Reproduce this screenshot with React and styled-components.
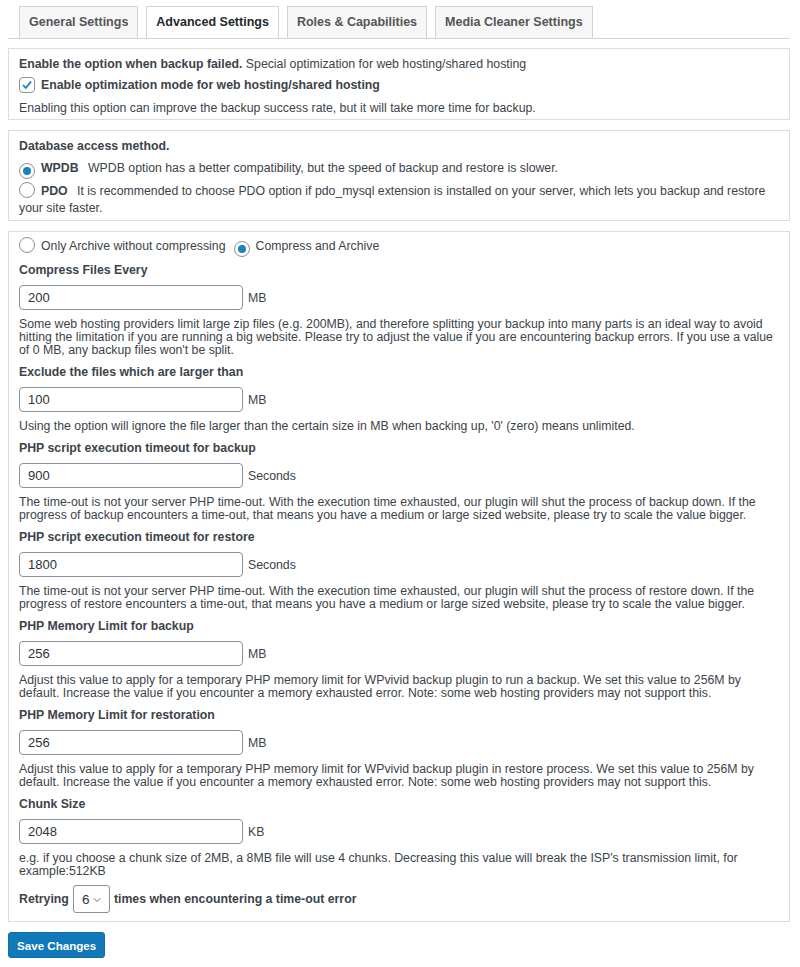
import React from 'react';
import styled, { createGlobalStyle } from 'styled-components';
import { ChevronDown } from 'lucide-react';

const GlobalStyle = createGlobalStyle`
  body {
    margin: 0;
    background: #fff;
    font-family: "Liberation Sans", Arial, sans-serif;
    font-size: 12.3px;
    color: #3c434a;
  }
`;

const Page = styled.div`
  width: 782px;
  padding: 6px 0 0 8px;
`;

const TabBar = styled.nav`
  display: flex;
  gap: 8px;
  padding-left: 11px;
  border-bottom: 1px solid #d4d4d4;
`;

const Tab = styled.div`
  height: 31px;
  line-height: 31px;
  padding: 0 9px;
  border: 1px solid #d4d4d4;
  border-bottom: none;
  background: ${(p) => (p.$active ? '#fff' : '#f7f7f7')};
  color: ${(p) => (p.$active ? '#23282d' : '#555')};
  font-size: 12.5px;
  font-weight: 600;
`;

const Box = styled.section`
  margin-top: ${(p) => p.$top || 10}px;
  background: #fff;
  border: 1px solid #dcdcdc;
  padding: ${(p) => p.$pad || '8px 10px 4px'};
`;

const Title = styled.div`
  line-height: 14px;
  font-weight: 700;
  color: #3c434a;

  span {
    font-weight: 400;
  }
`;

const Text = styled.div`
  line-height: 14px;
  margin-top: ${(p) => p.$top || 0}px;
`;

const CheckRow = styled.label`
  display: flex;
  align-items: center;
  gap: 6px;
  margin-top: 6px;
  height: 16px;
  font-weight: 700;
`;

const CheckBox = styled.span`
  width: 14px;
  height: 14px;
  border: 1px solid #8c8f94;
  border-radius: 4px;
  display: flex;
  align-items: center;
  justify-content: center;
  background: #fff;
`;

const RadioLine = styled.div`
  line-height: 17px;
  margin-top: ${(p) => p.$top || 0}px;

  b {
    font-weight: 700;
    margin-right: 6px;
  }
`;

const Radio = styled.span`
  display: inline-flex;
  vertical-align: -3px;
  width: 14px;
  height: 14px;
  margin-right: 6px;
  margin-left: ${(p) => p.$lead || 0}px;
  border: 1px solid #8c8f94;
  border-radius: 50%;
  align-items: center;
  justify-content: center;
  background: #fff;

  &::after {
    content: '';
    display: ${(p) => (p.$on ? 'block' : 'none')};
    width: 8px;
    height: 8px;
    border-radius: 50%;
    background: #1e81c0;
  }
`;

const Field = styled.div`
  margin-top: ${(p) => (p.$first ? 6 : 8)}px;
`;

const Label = styled.div`
  line-height: 14px;
  font-weight: 700;
`;

const InputRow = styled.div`
  display: flex;
  align-items: center;
  gap: 5px;
  margin-top: 8px;
`;

const Input = styled.input`
  width: 224px;
  height: 25px;
  box-sizing: border-box;
  border: 1px solid #8c8f94;
  border-radius: 4px;
  padding: 0 8px;
  font-family: inherit;
  font-size: 13px;
  color: #2c3338;
  background: #fff;
`;

const Desc = styled.p`
  margin: 8px 0 0;
  line-height: 13px;
`;

const Retry = styled.div`
  display: flex;
  align-items: center;
  gap: 4px;
  margin-top: 7px;
  font-weight: 700;
`;

const SelectWrap = styled.div`
  position: relative;
  width: 37px;
  height: 28px;
  box-sizing: border-box;
  border: 1px solid #8c8f94;
  border-radius: 3px;
  display: flex;
  align-items: center;
  padding-left: 8px;
  font-weight: 400;
  font-size: 13.5px;
  color: #2c3338;

  svg {
    position: absolute;
    right: 6px;
    top: 8px;
  }
`;

const SaveButton = styled.button`
  margin-top: 10px;
  height: 26px;
  padding: 0 8px;
  background: #1279b8;
  border: 1px solid #0e6ea9;
  border-radius: 3px;
  color: #fff;
  font-family: inherit;
  font-size: 11.6px;
  font-weight: 700;
`;

const fields = [
  {
    label: 'Compress Files Every',
    value: '200',
    unit: 'MB',
    desc: "Some web hosting providers limit large zip files (e.g. 200MB), and therefore splitting your backup into many parts is an ideal way to avoid hitting the limitation if you are running a big website. Please try to adjust the value if you are encountering backup errors. If you use a value of 0 MB, any backup files won't be split.",
  },
  {
    label: 'Exclude the files which are larger than',
    value: '100',
    unit: 'MB',
    desc: "Using the option will ignore the file larger than the certain size in MB when backing up, '0' (zero) means unlimited.",
  },
  {
    label: 'PHP script execution timeout for backup',
    value: '900',
    unit: 'Seconds',
    desc: 'The time-out is not your server PHP time-out. With the execution time exhausted, our plugin will shut the process of backup down. If the progress of backup encounters a time-out, that means you have a medium or large sized website, please try to scale the value bigger.',
  },
  {
    label: 'PHP script execution timeout for restore',
    value: '1800',
    unit: 'Seconds',
    desc: 'The time-out is not your server PHP time-out. With the execution time exhausted, our plugin will shut the process of restore down. If the progress of restore encounters a time-out, that means you have a medium or large sized website, please try to scale the value bigger.',
  },
  {
    label: 'PHP Memory Limit for backup',
    value: '256',
    unit: 'MB',
    desc: 'Adjust this value to apply for a temporary PHP memory limit for WPvivid backup plugin to run a backup. We set this value to 256M by default. Increase the value if you encounter a memory exhausted error. Note: some web hosting providers may not support this.',
  },
  {
    label: 'PHP Memory Limit for restoration',
    value: '256',
    unit: 'MB',
    desc: 'Adjust this value to apply for a temporary PHP memory limit for WPvivid backup plugin in restore process. We set this value to 256M by default. Increase the value if you encounter a memory exhausted error. Note: some web hosting providers may not support this.',
  },
  {
    label: 'Chunk Size',
    value: '2048',
    unit: 'KB',
    desc: "e.g.  if you choose a chunk size of 2MB, a 8MB file will use 4 chunks. Decreasing this value will break the ISP's transmission limit, for example:512KB",
  },
];

const App = () => {
  return (
    <Page>
      <GlobalStyle />
      <TabBar>
        <Tab>General Settings</Tab>
        <Tab $active>Advanced Settings</Tab>
        <Tab>Roles &amp; Capabilities</Tab>
        <Tab>Media Cleaner Settings</Tab>
      </TabBar>

      <Box $top={9}>
        <Title>
          Enable the option when backup failed. <span>Special optimization for web hosting/shared hosting</span>
        </Title>
        <CheckRow>
          <CheckBox>
            <svg width='12' height='12' viewBox='0 0 12 12'>
              <path d='M2 6.2 L4.8 9 L10 2.6' fill='none' stroke='#1e81c0' strokeWidth='1.8' />
            </svg>
          </CheckBox>
          Enable optimization mode for web hosting/shared hosting
        </CheckRow>
        <Text $top={8}>
          Enabling this option can improve the backup success rate, but it will take more time for backup.
        </Text>
      </Box>

      <Box $pad='8px 10px 3px'>
        <Title>Database access method.</Title>
        <RadioLine $top={7}>
          <Radio $on />
          <b>WPDB</b> WPDB option has a better compatibility, but the speed of backup and restore is slower.
        </RadioLine>
        <RadioLine $top={3}>
          <Radio />
          <b>PDO</b> It is recommended to choose PDO option if pdo_mysql extension is installed on your server, which lets you backup and restore your site faster.
        </RadioLine>
      </Box>

      <Box $pad='5px 10px 8px'>
        <RadioLine>
          <Radio />
          Only Archive without compressing
          <Radio $on $lead={8} />
          Compress and Archive
        </RadioLine>
        {fields.map((f, i) => (
          <Field key={f.label} $first={i === 0}>
            <Label>{f.label}</Label>
            <InputRow>
              <Input defaultValue={f.value} />
              {f.unit}
            </InputRow>
            <Desc>{f.desc}</Desc>
          </Field>
        ))}
        <Retry>
          Retrying
          <SelectWrap>
            6
            <ChevronDown size={12} strokeWidth={1.6} color='#3c434a' />
          </SelectWrap>
          times when encountering a time-out error
        </Retry>
      </Box>

      <SaveButton>Save Changes</SaveButton>
    </Page>
  );
};

export default App;
